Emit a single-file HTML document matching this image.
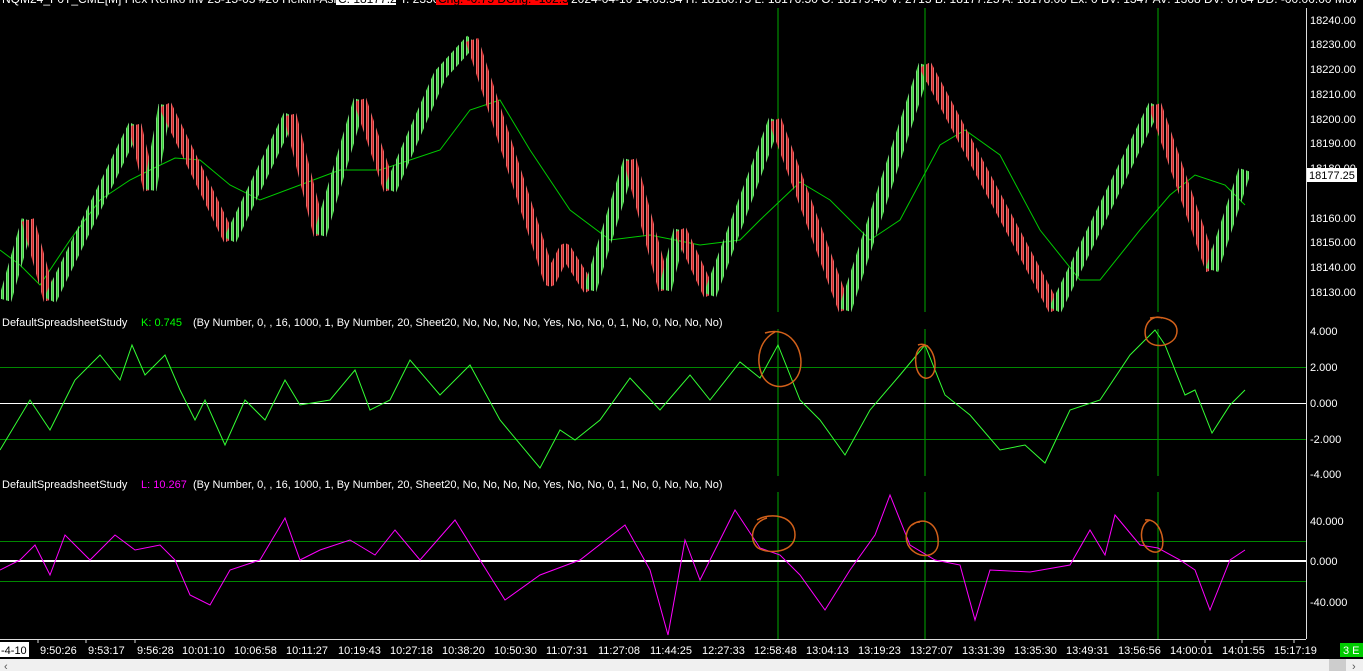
<!DOCTYPE html>
<html><head><meta charset="utf-8"><style>
html,body{margin:0;padding:0;background:#000;width:1363px;height:671px;overflow:hidden;font-family:"Liberation Sans",sans-serif}
svg text{font-family:"Liberation Sans",sans-serif}
</style></head><body>
<svg width="1363" height="671" viewBox="0 0 1363 671" xmlns="http://www.w3.org/2000/svg">
<defs>
<pattern id="pg" patternUnits="userSpaceOnUse" width="5" height="4"><rect x="1" y="0" width="3" height="4" fill="#7ee07e"/><rect x="2" y="0" width="1" height="4" fill="#3c3"/></pattern>
<pattern id="pr" patternUnits="userSpaceOnUse" width="5" height="4"><rect x="1" y="0" width="3" height="4" fill="#e86a6a"/><rect x="2" y="0" width="1" height="4" fill="#c22"/></pattern>
</defs>
<rect width="1363" height="671" fill="#000"/>
<!-- header -->
<text x="2" y="3" font-size="12" fill="#fff">NQM24_F0T_CME[M]  Flex Renko inv 25-15-05 #20 Heikin-Ashi</text>
<rect x="336" y="0" width="60" height="5" fill="#fff"/>
<text x="338" y="3" font-size="12" fill="#000">C: 18177.25</text>
<text x="400" y="3" font-size="12" fill="#fff">T: 2350</text>
<rect x="436" y="0" width="132" height="5" fill="#f00"/>
<text x="438" y="3" font-size="12" fill="#000">Chg: -0.75  DChg: -102.50</text>
<text x="571" y="3" font-size="12" fill="#fff">2024-04-10 14:03:54 H: 18180.75 L: 18176.50 O: 18179.40 V: 2715 B: 18177.25 A: 18178.00 Ex: 0 BV: 1347 AV: 1368 DV: 6764 DD: -00:00:00 Mov</text>
<!-- grid / axis -->
<line x1="1306.5" y1="8" x2="1306.5" y2="639" stroke="#ddd"/>
<line x1="0" y1="639.5" x2="1306" y2="639.5" stroke="#ddd"/>
<g stroke="#0a0" stroke-width="1">
<line x1="778" y1="8" x2="778" y2="639"/>
<line x1="925" y1="8" x2="925" y2="639"/>
<line x1="1158" y1="8" x2="1158" y2="639"/>
<line x1="0" y1="367.5" x2="1306" y2="367.5" stroke="#080"/>
<line x1="0" y1="439.5" x2="1306" y2="439.5" stroke="#080"/>
<line x1="0" y1="541.5" x2="1306" y2="541.5" stroke="#080"/>
<line x1="0" y1="581.5" x2="1306" y2="581.5" stroke="#080"/>
</g>
<line x1="0" y1="403.5" x2="1306" y2="403.5" stroke="#fff"/>
<line x1="0" y1="561" x2="1306" y2="561" stroke="#fff" stroke-width="2"/>
<rect x="0" y="312" width="1306" height="17" fill="#000"/>
<rect x="0" y="476" width="1306" height="16" fill="#000"/>
<!-- price axis labels -->
<g font-size="11" fill="#fff">
<text x="1310" y="24">18240.00</text><text x="1310" y="48">18230.00</text><text x="1310" y="73">18220.00</text>
<text x="1310" y="98">18210.00</text><text x="1310" y="123">18200.00</text><text x="1310" y="147">18190.00</text>
<text x="1310" y="172">18180.00</text><text x="1310" y="222">18160.00</text><text x="1310" y="246">18150.00</text>
<text x="1310" y="271">18140.00</text><text x="1310" y="296">18130.00</text>
<text x="1310" y="335">4.000</text><text x="1310" y="371">2.000</text><text x="1310" y="407">0.000</text>
<text x="1310" y="443">-2.000</text><text x="1310" y="478">-4.000</text>
<text x="1310" y="525">40.000</text><text x="1310" y="565">0.000</text><text x="1310" y="606">-40.000</text>
</g>
<rect x="1307" y="168" width="50" height="14" fill="#fff"/>
<text x="1309" y="179" font-size="11" fill="#000">18177.25</text>
<!-- MA -->
<polyline fill="none" stroke="#0c0" stroke-width="1" points="0,250 20,265 40,285 70,240 100,200 130,180 150,170 175,158 200,160 230,185 260,200 300,185 340,170 380,170 410,160 440,150 470,110 500,100 530,150 570,210 610,240 650,235 700,245 740,240 760,220 800,182 830,200 870,240 900,220 940,145 965,130 1000,155 1040,230 1080,280 1100,280 1140,230 1170,195 1195,175 1225,185 1245,205"/>
<!-- price bars -->
<g fill="none" stroke-width="13" stroke-linejoin="round">
<polyline stroke="url(#pg)" points="5,300 28,220"/>
<polyline stroke="url(#pr)" points="28,220 50,300"/>
<polyline stroke="url(#pg)" points="50,300 135,125"/>
<polyline stroke="url(#pr)" points="135,125 150,190"/>
<polyline stroke="url(#pg)" points="150,190 165,105"/>
<polyline stroke="url(#pr)" points="165,105 230,240"/>
<polyline stroke="url(#pg)" points="230,240 290,115"/>
<polyline stroke="url(#pr)" points="290,115 320,235"/>
<polyline stroke="url(#pg)" points="320,235 360,100"/>
<polyline stroke="url(#pr)" points="360,100 390,190"/>
<polyline stroke="url(#pg)" points="390,190 440,75 472,40"/>
<polyline stroke="url(#pr)" points="472,40 550,280 565,250 590,290"/>
<polyline stroke="url(#pg)" points="590,290 630,160"/>
<polyline stroke="url(#pr)" points="630,160 665,290"/>
<polyline stroke="url(#pg)" points="665,290 680,230"/>
<polyline stroke="url(#pr)" points="680,230 710,295"/>
<polyline stroke="url(#pg)" points="710,295 775,120"/>
<polyline stroke="url(#pr)" points="775,120 845,310"/>
<polyline stroke="url(#pg)" points="845,310 925,65"/>
<polyline stroke="url(#pr)" points="925,65 1055,310"/>
<polyline stroke="url(#pg)" points="1055,310 1155,105"/>
<polyline stroke="url(#pr)" points="1155,105 1212,270"/>
<polyline stroke="url(#pg)" points="1212,270 1245,170"/>
</g>
<!-- K oscillator -->
<text x="2" y="326" font-size="11" fill="#fff">DefaultSpreadsheetStudy</text>
<text x="141" y="326" font-size="11" fill="#0f0">K: 0.745</text>
<text x="193" y="326" font-size="11" fill="#fff">(By Number, 0, , 16, 1000, 1, By Number, 20, Sheet20, No, No, No, No, Yes, No, No, 0, 1, No, 0, No, No, No)</text>
<polyline fill="none" stroke="#3f3" stroke-width="1" points="0,450 30,400 50,430 75,380 100,355 120,380 132,345 145,375 165,355 180,390 195,420 205,400 225,445 245,400 265,420 285,380 300,405 330,400 355,370 370,410 390,400 410,360 440,395 470,365 500,420 540,468 560,430 575,440 600,420 630,378 660,410 690,375 710,400 740,362 760,378 778,345 800,400 820,420 845,455 870,410 900,375 925,345 945,395 970,415 1000,450 1025,445 1045,463 1070,410 1100,400 1130,355 1155,330 1165,345 1185,395 1195,390 1212,433 1230,405 1245,390"/>
<!-- L oscillator -->
<text x="2" y="488" font-size="11" fill="#fff">DefaultSpreadsheetStudy</text>
<text x="141" y="488" font-size="11" fill="#f0f">L: 10.267</text>
<text x="193" y="488" font-size="11" fill="#fff">(By Number, 0, , 16, 1000, 1, By Number, 20, Sheet20, No, No, No, No, Yes, No, No, 0, 1, No, 0, No, No, No)</text>
<polyline fill="none" stroke="#f0f" stroke-width="1" points="0,570 20,560 35,545 50,575 65,535 90,560 115,535 135,550 160,545 175,560 190,595 210,605 230,570 260,560 285,518 300,560 320,550 350,540 375,555 395,530 420,560 455,520 480,560 505,600 540,575 580,560 625,525 650,570 668,635 685,540 700,580 735,510 760,548 780,555 800,575 825,610 850,570 875,535 890,495 910,545 935,560 960,565 975,620 990,570 1030,572 1070,565 1090,530 1105,555 1115,515 1140,545 1158,548 1180,560 1195,570 1210,610 1230,560 1245,550"/>
<!-- annotations -->
<g fill="none" stroke="#d2601a" stroke-width="1.5">
<path d="M765,333 C790,325 805,350 800,370 C795,390 770,392 762,375 C755,358 760,340 775,332"/>
<path d="M918,345 C930,340 938,360 934,372 C930,382 918,380 916,365 C914,352 920,344 928,346"/>
<path d="M1150,318 C1170,315 1182,325 1175,338 C1168,348 1150,348 1146,338 C1142,325 1152,314 1162,318"/>
<path d="M757,520 C770,512 795,515 795,535 C795,552 770,555 758,548 C748,540 752,522 767,518"/>
<path d="M912,525 C925,515 940,525 938,545 C935,560 915,558 908,545 C903,533 910,522 920,522"/>
<path d="M1145,520 C1160,518 1165,540 1162,548 C1158,556 1146,552 1142,540 C1140,530 1144,522 1150,520"/>
</g>
<!-- time axis -->
<g stroke="#ddd"><line x1="38" y1="640" x2="38" y2="643"/><line x1="86" y1="640" x2="86" y2="643"/><line x1="135" y1="640" x2="135" y2="643"/><line x1="1205" y1="640" x2="1205" y2="643"/><line x1="1242" y1="640" x2="1242" y2="643"/><line x1="1294" y1="640" x2="1294" y2="643"/></g>
<rect x="0" y="642" width="29" height="15" fill="#fff"/>
<g font-size="11" fill="#fff">
<text x="1" y="654" fill="#000">-4-10</text>
<text x="40" y="654">9:50:26</text><text x="88" y="654">9:53:17</text><text x="137" y="654">9:56:28</text>
<text x="182" y="654">10:01:10</text><text x="234" y="654">10:06:58</text><text x="286" y="654">10:11:27</text>
<text x="338" y="654">10:19:43</text><text x="390" y="654">10:27:18</text><text x="442" y="654">10:38:20</text>
<text x="494" y="654">10:50:30</text><text x="546" y="654">11:07:31</text><text x="598" y="654">11:27:08</text>
<text x="650" y="654">11:44:25</text><text x="702" y="654">12:27:33</text><text x="754" y="654">12:58:48</text>
<text x="806" y="654">13:04:13</text><text x="858" y="654">13:19:23</text><text x="910" y="654">13:27:07</text>
<text x="962" y="654">13:31:39</text><text x="1014" y="654">13:35:30</text><text x="1066" y="654">13:49:31</text>
<text x="1118" y="654">13:56:56</text><text x="1170" y="654">14:00:01</text><text x="1222" y="654">14:01:55</text>
<text x="1274" y="654">15:17:19</text>
</g>
<rect x="1340" y="643" width="23" height="14" fill="#0c0"/>
<text x="1343" y="654" font-size="11" fill="#fff">3 E</text>
<rect x="0" y="659" width="1363" height="12" fill="#f0f0f0"/>
<rect x="1329" y="659" width="17" height="12" fill="#cdcdcd"/>
<text x="4" y="670" font-size="11" fill="#555">‹</text>
<text x="1352" y="670" font-size="11" fill="#555">›</text>
</svg>
</body></html>
